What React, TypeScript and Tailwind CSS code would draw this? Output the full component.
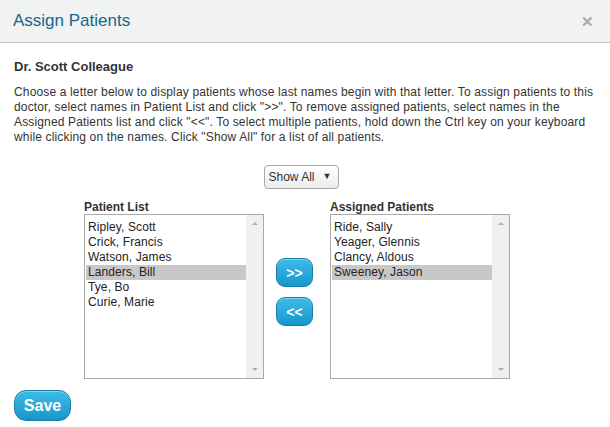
const patients = ["Ripley, Scott", "Crick, Francis", "Watson, James", "Landers, Bill", "Tye, Bo", "Curie, Marie"];
const assigned = ["Ride, Sally", "Yeager, Glennis", "Clancy, Aldous", "Sweeney, Jason"];

function ListBox({ label, items, selected }: { label: string; items: string[]; selected: string }) {
  return (
    <div className="w-[180px]">
      <div className="text-[12px] font-bold text-[#333] leading-[14px]">{label}</div>
      <div className="flex h-[165px] border border-[#a9a9a9] bg-white">
        <div className="flex-1 pt-[5px] pl-[1px]">
          {items.map((n) => (
            <div
              key={n}
              className={`h-[15px] leading-[15px] text-[12px] tracking-[0.1px] pl-[2px] text-[#222] ${n === selected ? "bg-[#c8c8c8]" : ""}`}
            >
              {n}
            </div>
          ))}
        </div>
        <div className="w-[17px] bg-[#f0f0f0] flex flex-col justify-between items-center py-[7px]">
          <span className="w-0 h-0 border-x-[3px] border-x-transparent border-b-[3px] border-b-[#b0b0b0]" />
          <span className="w-0 h-0 border-x-[3px] border-x-transparent border-t-[3px] border-t-[#b0b0b0]" />
        </div>
      </div>
    </div>
  );
}

function ArrowButton({ text }: { text: string }) {
  return (
    <button className="w-[37px] h-[29px] rounded-[9px] border border-[#1b7eaa] bg-gradient-to-b from-[#3cbce8] to-[#1597cb] text-white text-[14px] font-bold leading-none shadow-[inset_0_1px_0_rgba(255,255,255,0.35)]">
      {text}
    </button>
  );
}

export default function App() {
  return (
    <div className="w-[610px] h-[427px] bg-white overflow-hidden" style={{ fontFamily: '"Liberation Sans", Arial, sans-serif' }}>
      <div className="h-[43px] bg-[#f1f2f2] border-b border-[#c4c4c4] flex items-center justify-between pl-[13px] pr-[16px]">
        <h1 className="text-[17px] text-[#17658a] leading-none -mt-[2px]">Assign Patients</h1>
        <span className="text-[15px] font-bold text-[#aaaaaa] leading-none">✕</span>
      </div>

      <div className="px-[14px] pt-[16px]">
        <h2 className="text-[13px] font-bold text-[#333] leading-[15px]">Dr. Scott Colleague</h2>
        <p className="mt-[11px] text-[12px] leading-[15px] tracking-[0.15px] text-[#333] whitespace-nowrap">
          Choose a letter below to display patients whose last names begin with that letter. To assign patients to this
          <br />
          doctor, select names in Patient List and click "&gt;&gt;". To remove assigned patients, select names in the
          <br />
          Assigned Patients list and click "&lt;&lt;". To select multiple patients, hold down the Ctrl key on your keyboard
          <br />
          while clicking on the names. Click "Show All" for a list of all patients.
        </p>

        <div className="flex justify-center mt-[20px] pr-[8px]">
          <div className="w-[75px] h-[24px] rounded-[4px] border border-[#a8a8a8] bg-gradient-to-b from-white to-[#ececec] flex items-center justify-between pl-[4px] pr-[6px] text-[12px] text-[#333]">
            <span>Show All</span>
            <span className="text-[9px]">▼</span>
          </div>
        </div>

        <div className="flex mt-[11px] ml-[70px]">
          <ListBox label="Patient List" items={patients} selected="Landers, Bill" />
          <div className="flex flex-col gap-[10px] ml-[12px] mr-[17px] pt-[58px]">
            <ArrowButton text=">>" />
            <ArrowButton text="<<" />
          </div>
          <ListBox label="Assigned Patients" items={assigned} selected="Sweeney, Jason" />
        </div>

        <button className="mt-[11px] w-[57px] h-[31px] rounded-[12px] border border-[#1b7eaa] bg-gradient-to-b from-[#3cbce8] to-[#1597cb] text-white text-[16px] font-bold leading-none shadow-[inset_0_1px_0_rgba(255,255,255,0.35)]">
          Save
        </button>
      </div>
    </div>
  );
}
